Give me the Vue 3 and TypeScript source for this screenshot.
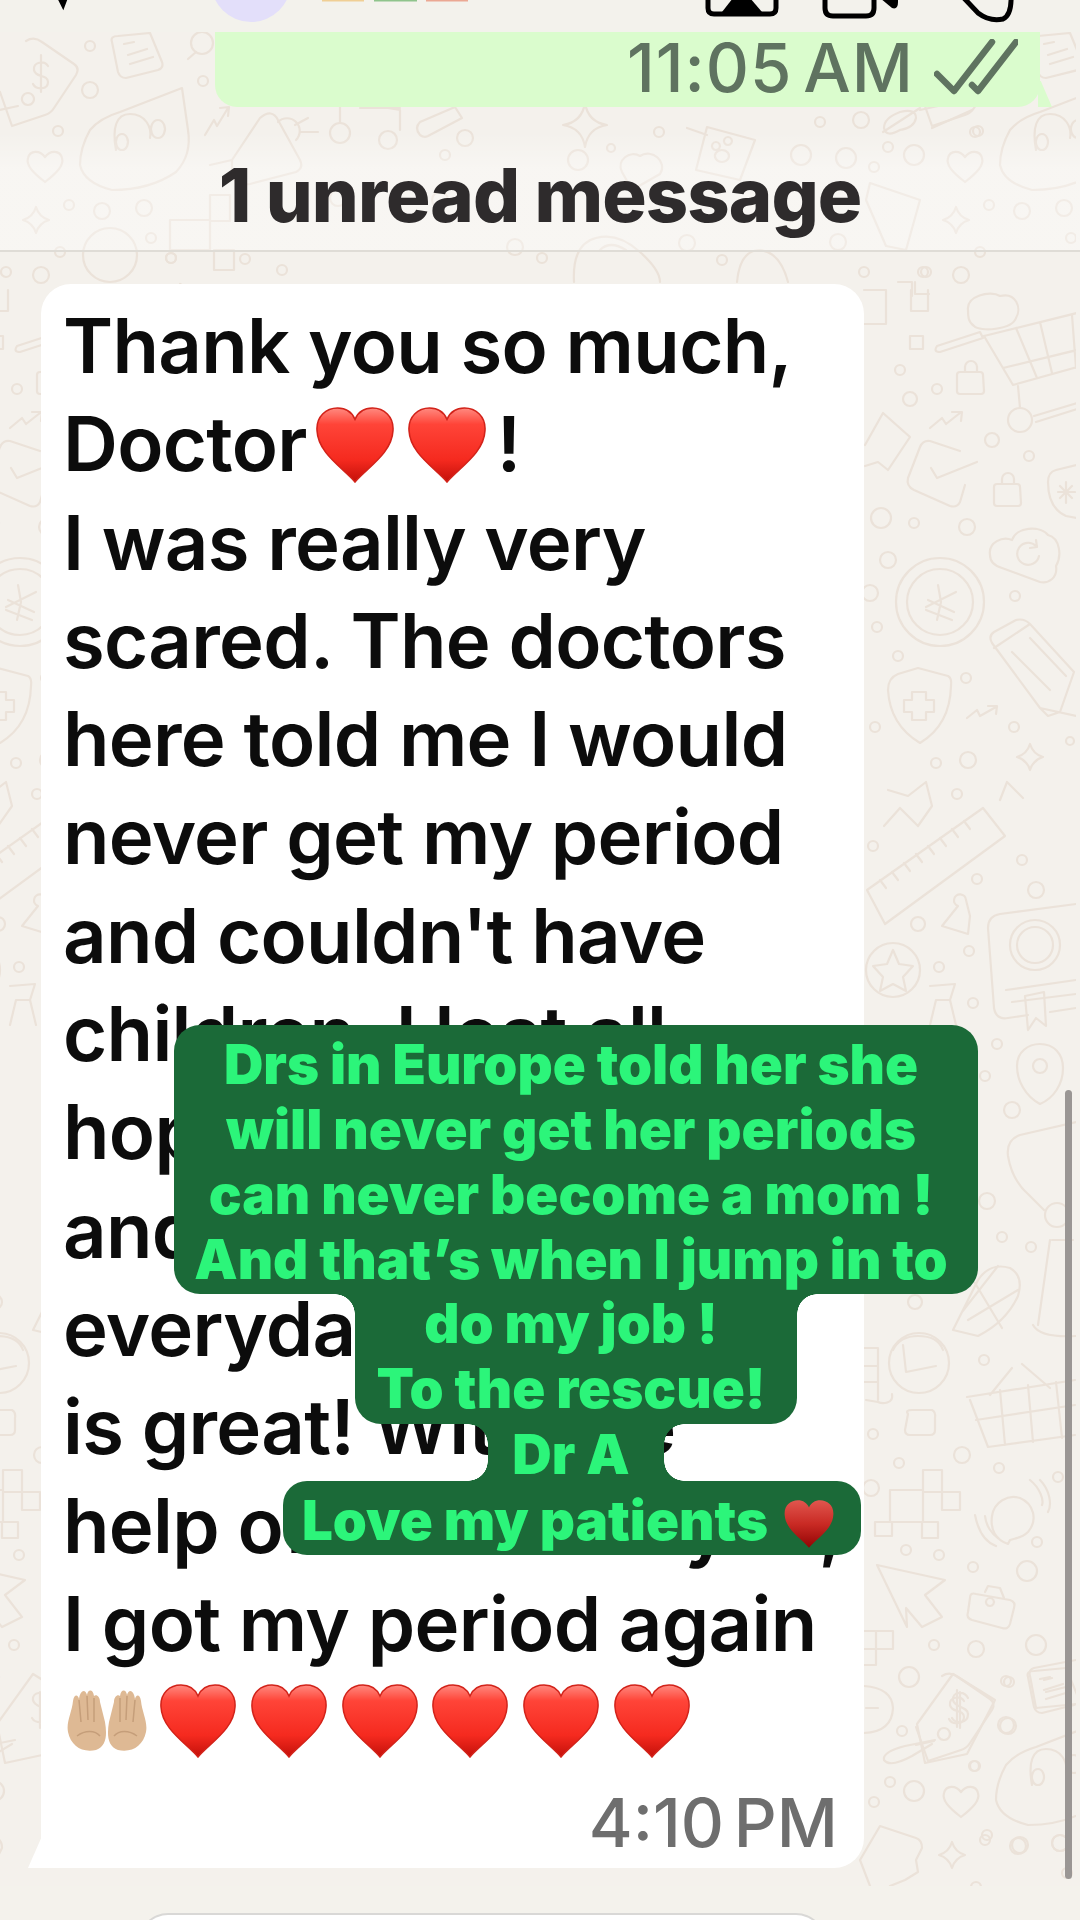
<template>
  <div class="page">
    <svg class="sprites" width="0" height="0" aria-hidden="true">
      <defs>
        <linearGradient id="heart-fill" x1="0" y1="0" x2="0" y2="1">
          <stop offset="0" stop-color="#ff8a80" />
          <stop offset="0.22" stop-color="#ff4438" />
          <stop offset="0.7" stop-color="#f52a1f" />
          <stop offset="1" stop-color="#c4100a" />
        </linearGradient>
        <linearGradient id="heart-dark" x1="0" y1="0" x2="0" y2="1">
          <stop offset="0" stop-color="#e0564e" />
          <stop offset="0.5" stop-color="#c92a24" />
          <stop offset="1" stop-color="#930404" />
        </linearGradient>
        <symbol id="heart" viewBox="0 0 76 76">
          <path :d="heartPath" fill="url(#heart-fill)" stroke="#d2231a" stroke-width="1.5" />
        </symbol>
        <symbol id="heart-small" viewBox="0 0 76 76">
          <path :d="heartPath" fill="url(#heart-dark)" />
        </symbol>
      </defs>
    </svg>

    <svg class="top" width="1080" height="32" viewBox="0 0 1080 32">
      <path d="M58 -6 L63 4 L66 -4" fill="none" stroke="#000" stroke-width="5" stroke-linecap="round" />
      <circle cx="251" cy="-18" r="40" fill="#e3dffa" />
      <rect x="322" y="0" width="42" height="1.5" fill="#f0cf95" />
      <rect x="374" y="0" width="43" height="1.5" fill="#8fc48c" />
      <rect x="426" y="0" width="42" height="1.5" fill="#eba893" />
      <path d="M708 -6 V8 Q708 14 714 14 H770 Q776 14 776 8 V-6" fill="none" stroke="#000" stroke-width="5" />
      <path d="M722 12 L733 -2 H750 L762 12 Z" fill="#000" />
      <path d="M825 -6 V8 Q825 16 833 16 H866 Q874 16 874 8 V-6" fill="none" stroke="#000" stroke-width="5" />
      <path d="M880 -2 L892 8 Q898 10 898 2 V-6 H880 Z" fill="#000" />
      <path d="M962 -4 L978 13 Q990 22 1003 19 Q1012 15 1011 -6" fill="none" stroke="#000" stroke-width="5" stroke-linecap="round" />
    </svg>

    <main class="chat">
      <svg class="doodles" width="1076" height="1854" viewBox="0 32 1076 1854" fill="none">
        <g id="strip">
          <path v-for="(d, i) in stripPaths" :key="i" :d="d" />
          <circle v-for="(c, i) in stripDots" :key="i" :cx="c[0]" :cy="c[1]" :r="c[2]" />
        </g>
        <g id="margin">
          <path v-for="(d, i) in marginPaths" :key="i" :d="d" />
          <circle v-for="(c, i) in marginDots" :key="i" :cx="c[0]" :cy="c[1]" :r="c[2]" />
        </g>
        <use href="#margin" x="-920" />
        <use href="#strip" x="920" />
        <use href="#strip" x="916" y="1635" />
        <path v-for="(d, i) in topPaths" :key="i" :d="d" />
        <circle v-for="(c, i) in topDots" :key="i" :cx="c[0]" :cy="c[1]" :r="c[2]" />
      </svg>

      <div class="sent">
        <span class="sent-time">11:05 AM</span>
        <svg class="ticks" width="84" height="56" viewBox="0 0 84 56" fill="none">
          <path d="M3 35 L20 52 L58 3 M38 46 L44 52 L82 3" stroke="#5f7360" stroke-width="6.5" stroke-linecap="round" stroke-linejoin="round" />
        </svg>
      </div>

      <div class="unread"><span>1 unread message</span></div>

      <section class="received">
        <div class="line">Thank you so much,</div>
        <div class="line">
          Doctor<svg class="heart first"><use href="#heart" /></svg><svg class="heart"><use href="#heart" /></svg><span class="bang">!</span>
        </div>
        <div v-for="l in messageLines" :key="l" class="line">{{ l }}</div>
        <div class="line emojis">
          <svg class="hands" width="84" height="66" viewBox="0 0 84 66">
            <g v-for="t in handTransforms" :key="t" :transform="t">
              <path d="M3 46 C1 36 7 26 8 15 C9 8 13 8 14 13 C15 5 20 2 22 9 C23 3 28 3 29 10 C31 8 35 10 35 16 L40 36 C42 48 42 60 31 64 C17 67 6 60 3 46Z" fill="#deb994" />
              <path d="M14 14 L16 36 M22 10 L23 34 M29 12 L29 36 M12 50 C20 44 30 44 35 50" fill="none" stroke="#c59e7a" stroke-width="1.5" />
            </g>
          </svg>
          <svg v-for="n in 6" :key="n" class="heart row"><use href="#heart" /></svg>
        </div>
        <div class="received-time">4:10 PM</div>

        <div class="caption">
          <div class="cap cap-main">
            <div v-for="l in captionMain" :key="l">{{ l }}</div>
          </div>
          <div class="cap cap-mid">
            <div>do my job !</div>
            <div>To the rescue!</div>
          </div>
          <div class="cap cap-name">Dr A</div>
          <div class="cap cap-love">
            Love my patients<svg class="heart-cap"><use href="#heart-small" /></svg>
          </div>
        </div>
      </section>

      <div class="scrollbar"></div>
    </main>

    <footer class="footer">
      <div class="input"></div>
    </footer>
  </div>
</template>

<script setup lang="ts">
type Dot = [number, number, number];

const heartPath =
  "M38 74 C26 60 2 46 1 24 C0 10 10 2 21 2 C29 2 35 6 38 13 C41 6 47 2 55 2 C66 2 76 10 75 24 C74 46 50 60 38 74Z";

const handTransforms = ["", "matrix(-1 0 0 1 84 0)"];

const messageLines: string[] = [
  "I was really very",
  "scared. The doctors",
  "here told me I would",
  "never get my period",
  "and couldn't have",
  "children. I lost all",
  "hope, but you helped",
  "and I take my pills",
  "everyday. My health",
  "is great! With the",
  "help of Allah and you,",
  "I got my period again",
];

const captionMain: string[] = [
  "Drs in Europe told her she",
  "will never get her periods",
  "can never become a mom !",
  "And that’s when I jump in to",
];

const lock = (x: number, y: number) =>
  `M${x} ${y + 12} h20 q3 0 3 3 l1 16 q0 3 -3 3 h-21 q-3 0 -3 -3 v-16 q0 -3 3 -3z M${x + 5} ${y + 12} v-5 a6 6 0 0 1 12 0 v5`;

const star = (x: number, y: number, r: number) =>
  `M${x} ${y - r} Q${x + 3} ${y - 3} ${x + r} ${y} Q${x + 3} ${y + 3} ${x} ${y + r} Q${x - 3} ${y + 3} ${x - r} ${y} Q${x - 3} ${y - 3} ${x} ${y - r}Z`;

// left end of the wallpaper, it comes back on the right and at the bottom
const stripPaths: string[] = [
  "M26 41 Q34 36 42 42 L74 64 Q80 68 76 75 L54 108 Q51 113 45 115 L12 126 L0 92",
  "M41 55 V92 M48 66 C44 60 33 62 34 70 C35 78 48 74 48 82 C48 90 36 90 33 84",
  "M0 110 L18 106 M28 105 a6 6 0 1 0 -0.1 0",
  "M112 42 Q110 36 118 36 L150 33 L162 62 Q164 68 158 70 L126 78 Q120 78 118 72 Z M124 44 L134 42 M128 55 L147 49 M130 64 L153 57",
  "M196 52 L188 59",
  "M90 130 Q80 148 80 165 Q84 183 112 190 Q150 190 176 172 Q192 155 188 130 L182 88 L120 112 Q100 118 90 130Z",
  "M116 150 C112 128 116 114 130 114 C146 114 152 128 150 138 M122 150 a6 8 0 1 0 -0.1 0 M158 138 a7 9 0 1 0 -0.1 0",
  "M205 135 L214 120 L217 126 L228 108 M220 108 L229 107 L228 116",
  "M45 182 C32 172 26 165 28 158 C30 150 40 150 45 157 C50 150 60 150 62 158 C64 165 58 172 45 182Z",
  star(36, 220, 13),
];
const stripDots: Dot[] = [
  [90, 46, 5], [203, 81, 5], [90, 90, 8], [58, 131, 5], [69, 205, 5],
  [102, 211, 8], [144, 208, 8], [151, 238, 5], [60, 252, 5], [171, 258, 5], [245, 259, 5],
  [202, 43, 11], [41, 275, 8], [6, 272, 5],
];

// wallpaper in the right margin, reused on the left of the bubble
const marginPaths: string[] = [
  "M937 346 L980 332 L983 338 L940 352 Q933 352 937 346Z",
  "M984 336 L1013 385 L1077 367 M984 336 L1077 313 M1003 368 L1077 350 M1016 328 L1037 378 M1040 322 L1052 373 M1072 315 L1076 368",
  "M1018 386 L1020 408 M1034 416 L1077 403 M1036 422 L1077 409",
  "M968 310 C966 296 990 290 1000 296 C1016 292 1022 308 1016 318 C1012 330 980 332 974 326 C968 322 968 316 968 310Z",
  "M910 336h13v13h-13z M911 290v21h17v-21 M864 290 h22 v34 h-22",
  lock(960, 360),
  lock(997, 472),
  "M865 445 L883 413 L910 437 L888 470 L878 462 L865 466",
  "M930 428 L942 418 L946 424 L960 413 M952 412 L962 412 L961 421",
  "M960 451 L930 441 Q923 440 920 447 L908 478 Q906 486 914 490 L950 506 Q957 508 960 502 L965 485 M931 468 L937 478 L977 462",
  "M1077 465 L1056 470 Q1048 472 1048 482 Q1048 508 1066 516 L1077 518 M1058 492 L1075 492 M1066 482 L1066 503 M1060 486 L1072 498 M1072 486 L1060 498",
  "M990 555 C988 542 1003 536 1012 540 C1016 527 1040 525 1048 535 C1060 538 1062 556 1056 566 C1058 578 1048 584 1040 582 L1002 568 C995 566 990 562 990 555Z",
  "M1036 546 A11 11 0 1 0 1039 556 M1036 540 L1037 547 L1030 548",
  "M938 585 L941 602 L937 620 M956 592 L926 607 M928 600 L954 612 M926 610 L952 620",
  "M992 643 Q988 636 994 632 L1016 620 Q1024 618 1030 624 L1074 672 L1060 712 L1048 716 L1040 708 Z M994 648 L1030 624 M1012 652 L1050 690 M1030 638 L1066 676 M1040 708 L1076 716",
  "M888 690 Q888 678 898 674 L918 668 L948 676 Q952 678 951 686 Q950 725 920 743 Q890 725 888 690Z M912 692 h14 v8 h8 v12 h-8 v8 h-14 v-8 h-8 v-12 h8z",
  "M967 718 L977 710 L980 716 L996 707 M988 706 L997 706 L996 714",
  star(1030, 757, 13),
  "M884 826 L900 808 M888 790 L908 796 L926 782 L932 806 L918 826 L900 808",
  "M1000 800 L1007 782 L1023 798",
  "M867 890 L983 808 L1005 836 L885 924 Z M880 880 L886 888 M892 872 L898 880 M904 863 L910 871 M916 854 L922 862 M928 846 L934 854 M940 838 L946 846 M952 829 L958 837 M964 821 L970 829",
  "M893 950 L899 964 L913 966 L903 977 L906 991 L893 984 L880 991 L883 977 L873 966 L887 964 Z",
  "M942 926 L958 906 a6 6 0 1 1 8 -6 L970 916 L968 934 Z",
  "M1076 904 L1000 914 Q988 916 988 928 L994 1008 Q996 1020 1008 1018 L1028 1015 M1050 1012 L1076 1008 M1006 990 L1076 980 M1012 1002 L1076 994",
  "M1025 996 L1044 992 L1046 1026 L1036 1018 L1028 1030 Z",
  "M930 986 L955 984 L950 1000 L956 1025 M936 1000 L930 1025 M936 1000 H950",
  "M1040 1104 C1025 1096 1017 1080 1017 1066 C1017 1052 1028 1044 1040 1044 C1054 1044 1063 1054 1063 1068 C1063 1084 1054 1098 1040 1104Z",
  "M1076 1122 L1020 1135 Q1006 1140 1008 1156 Q1012 1180 1028 1194 L1044 1210",
  "M1052 1240 L1073 1240 M1050 1240 L1038 1325 M1033 1325 Q1040 1338 1076 1336",
  "M953 1330 L978 1280 Q990 1262 1010 1268 Q1024 1276 1018 1296 Q1006 1322 978 1336 Z M975 1283 L1002 1328 M998 1266 L962 1312 M1018 1290 L968 1320",
  "M893 1350 Q900 1336 918 1336 Q938 1336 943 1350",
  "M892 1394 C894 1404 882 1404 878 1402 L866 1400 M864 1348 H878 V1400 M864 1366 H878 M864 1382 H878",
  "M903 1345 L906 1372 L936 1366",
  "M967 1397 L1075 1380 M970 1400 L988 1447 L1075 1435 M976 1420 L1075 1405 M1000 1390 L1005 1445 M1028 1385 L1033 1442 M1056 1382 L1062 1438 M990 1395 L1012 1368 M1022 1364 L1050 1388",
  "M908 1414 Q905 1410 912 1410 H932 Q936 1412 935 1418 V1430 Q935 1435 930 1435 H910 Q905 1435 905 1430 Z",
  "M923 1470 h19 v22 h-19z M890 1490 h33 v32 h-33z M942 1492 h18 v18 h-18z M922 1522 h16 v16 h-16z M875 1522 h17 v14 h-17z M923 1492 v30",
  "M1008 1544 C996 1540 990 1530 992 1516 C994 1502 1008 1494 1020 1498 C1034 1504 1038 1520 1028 1532 C1022 1538 1016 1538 1010 1540 Z",
  "M1040 1480 C1050 1490 1052 1505 1048 1512 M1030 1480 C1040 1488 1044 1500 1042 1505 M975 1515 C978 1530 985 1542 996 1546 M985 1516 C986 1526 992 1534 998 1538",
  "M877 1565 L945 1580 L925 1595 L942 1617 L922 1627 L906 1608 L907 1627 Z",
  "M970 1598 Q970 1592 976 1594 L1010 1600 Q1016 1602 1014 1608 L1010 1624 Q1008 1630 1002 1628 L972 1620 Q966 1618 968 1612 Z M985 1592 L988 1586 L1000 1588 L1004 1598 M990 1606 a4 4 0 1 0 -0.1 0",
  "M1076 1660 L1034 1668 Q1028 1670 1030 1676 L1036 1708 L1076 1704 M1044 1680 L1052 1678 M1046 1692 L1070 1686",
  "M864 1631 h12 v18 h-12 M876 1631 h17 v18 h-17z M864 1649 h12 v16 h-12",
  "M864 1686 Q892 1688 893 1708 Q892 1732 864 1733 M866 1708 H878",
  "M953 1674 L995 1700 L967 1754 L925 1763 L917 1724 Z M960 1692 V1728 M968 1698 C964 1690 952 1692 953 1700 C954 1708 968 1706 968 1714 C968 1724 955 1724 952 1718",
  "M935 1740 L905 1746 Q882 1752 884 1760 Q890 1768 912 1756 L932 1744",
  "M870 1886 L860 1860 L880 1826 L916 1838 Q922 1840 922 1848 L916 1860 L918 1872 L905 1880 L890 1886",
];
const marginDots: Dot[] = [
  [1020, 420, 12], [900, 370, 5], [937, 389, 5], [910, 399, 7], [992, 440, 7], [1029, 456, 5],
  [881, 518, 10], [914, 523, 5], [967, 527, 8], [888, 560, 8], [1015, 596, 5], [870, 593, 8],
  [940, 602, 44], [940, 602, 33], [877, 627, 5], [898, 656, 5], [966, 678, 5], [1014, 727, 5],
  [875, 727, 5], [936, 763, 5], [968, 760, 8], [957, 794, 5], [1070, 741, 4], [873, 846, 5],
  [893, 970, 27], [918, 924, 7], [977, 879, 5], [969, 951, 5], [939, 967, 5], [973, 1003, 5],
  [1022, 860, 5], [1036, 890, 8], [997, 1044, 5], [1012, 1110, 8], [985, 1076, 5], [1002, 1237, 5],
  [1031, 1247, 5], [915, 1302, 7], [987, 1201, 8], [1035, 945, 25], [1035, 945, 18], [1040, 1066, 7],
  [1057, 1215, 12], [919, 1363, 30], [873, 1434, 5], [899, 1463, 5], [962, 1455, 8], [984, 1360, 5],
  [999, 1468, 5], [1058, 1477, 5], [906, 1550, 5], [939, 1555, 5], [973, 1567, 5], [1037, 1542, 5],
  [1027, 1571, 10], [871, 1488, 8], [934, 1645, 5], [976, 1649, 8], [1036, 1645, 10], [909, 1677, 10],
  [1009, 1682, 5], [1008, 1726, 8], [902, 1731, 5], [975, 1766, 5], [890, 1782, 5], [914, 1791, 10],
  [874, 1802, 5], [987, 1835, 5], [1020, 1845, 8], [1060, 1843, 8],
];

// middle of the strip above the white bubble
const topPaths: string[] = [
  "M232 160 L260 118 Q272 108 278 120 L300 160 Q304 168 296 172 L250 184 Q236 186 232 176 Z M232 160 L210 165",
  "M278 122 A12 12 0 1 1 296 140 M295 125 L308 118 M300 132 L318 132",
  "M340 105 V122 M388 108 L400 110 V130 M360 108 H400",
  "M420 135 Q414 128 420 122 L455 107 L462 118 L428 136 Q424 138 420 135Z",
  "M574 282 Q572 244 596 238 Q618 232 640 252 Q660 270 660 282 M600 250 Q610 240 626 250",
  star(585, 125, 22),
  "M687 128 L707 135 M707 127 L755 140 L740 180 L696 170 Z M716 150 a4 4 0 1 0 -0.1 0 M728 145 a4 4 0 1 0 -0.1 0 M722 162 a7 6 0 1 0 -0.1 0",
  "M622 172 C616 160 630 150 640 156 C652 148 668 162 660 174 L632 190 Z",
  "M883 132 L920 108 M900 130 Q886 138 884 128 Q884 118 900 112 Q916 108 916 118 Q914 128 900 130 M932 128 L972 110",
  "M870 183 L920 200 L906 250 L886 246 L866 200 Z",
  "M737 282 Q740 250 760 250 Q780 252 788 282",
  "M898 282 h14 v14 M915 282 v12 h14",
  "M170 220 h40 v30 h-40z M210 195 h20 v26 h-20z M214 250 h20 v20 h-20z",
  "M196 294 L180 284",
];
const topDots: Dot[] = [
  [340, 133, 10], [388, 140, 9], [465, 138, 8], [659, 132, 5], [611, 148, 4], [861, 120, 8], [820, 122, 5],
  [975, 132, 5], [801, 155, 10], [846, 158, 10], [914, 155, 10], [888, 147, 5], [874, 167, 5], [578, 160, 10],
  [838, 242, 8], [722, 260, 5], [687, 243, 8], [542, 258, 5], [515, 247, 8], [864, 272, 5], [923, 272, 5],
  [338, 198, 8], [440, 200, 8], [445, 155, 5], [171, 258, 5], [282, 270, 5], [110, 255, 27],
];
</script>

<style>
html,
body {
  margin: 0;
  background: #f4f2ec;
}
</style>

<style scoped>
.page {
  width: 1080px;
  height: 1920px;
  display: flex;
  flex-direction: column;
  overflow: hidden;
  background: #f4f2ec;
  font-family: Inter, "Liberation Sans", sans-serif;
}

.sprites {
  position: absolute;
}

.top {
  display: block;
  flex: none;
  background: #f3f2ec;
}

.chat {
  position: relative;
  isolation: isolate;
  height: 1854px;
  flex: none;
  display: flex;
  flex-direction: column;
  background: #f4f1ec;
}

.doodles {
  position: absolute;
  left: 0;
  top: 0;
  z-index: -1;
  stroke: #ebe2d9;
  stroke-width: 2.2;
  stroke-linecap: round;
  stroke-linejoin: round;
}

.sent {
  position: relative;
  margin-left: 215px;
  width: 825px;
  height: 75px;
  box-sizing: border-box;
  padding-right: 22px;
  display: flex;
  justify-content: flex-end;
  align-items: center;
  gap: 20px;
  background: #dafccd;
  border-radius: 0 0 22px 22px;
}

.sent::after {
  content: "";
  position: absolute;
  right: -12px;
  bottom: 0;
  width: 14px;
  height: 26px;
  background: #dafccd;
  clip-path: polygon(0 0, 20% 0, 100% 100%, 0 100%);
}

.sent-time {
  margin-top: -4px;
  font-size: 67px;
  line-height: 75px;
  font-weight: 500;
  color: #5f7360;
  letter-spacing: 1px;
  word-spacing: -8px;
}

.ticks {
  margin-top: -6px;
}

.unread {
  margin-top: 25px;
  height: 120px;
  padding-top: 8px;
  box-sizing: border-box;
  display: flex;
  align-items: center;
  justify-content: center;
  background: linear-gradient(to bottom, rgba(255, 255, 255, 0), rgba(255, 255, 255, 0.35) 30%);
  border-bottom: 2px solid #dfdcd6;
  font-size: 74px;
  font-weight: 800;
  color: #2e2b2c;
  letter-spacing: -0.9px;
}

.received {
  position: relative;
  margin-top: 32px;
  margin-left: 41px;
  width: 823px;
  height: 1584px;
  box-sizing: border-box;
  padding: 12px 24px 0 22px;
  background: #fff;
  border-radius: 30px 30px 30px 12px;
  color: #0c0c0c;
}

.received::before {
  content: "";
  position: absolute;
  left: -13px;
  bottom: 0;
  width: 24px;
  height: 30px;
  background: #fff;
  clip-path: polygon(55% 0, 100% 0, 100% 100%, 0 100%);
}

.line {
  height: 98.3px;
  font-size: 76px;
  line-height: 98.3px;
  font-weight: 600;
  letter-spacing: -0.7px;
  white-space: nowrap;
}

.heart {
  width: 78px;
  height: 78px;
  vertical-align: -13px;
  margin-left: 14px;
}

.heart.first {
  margin-left: 9px;
}

.bang {
  margin-left: 11px;
}

.emojis {
  display: flex;
  align-items: flex-start;
}

.hands {
  margin-top: 14px;
  margin-left: 2px;
}

.heart.row {
  width: 76px;
  height: 76px;
  margin: 11px 14.8px 0 0;
}

.hands + .heart.row {
  margin-left: 11px;
}

.received-time {
  margin-top: 15px;
  padding-right: 2px;
  text-align: right;
  font-size: 67px;
  line-height: 76px;
  font-weight: 500;
  color: #6e6e6e;
  letter-spacing: 0;
  word-spacing: -8px;
}

.caption {
  position: absolute;
  left: 133px;
  top: 741px;
  width: 804px;
  display: flex;
  flex-direction: column;
  align-items: center;
  font-size: 54.6px;
  line-height: 65px;
  font-weight: 900;
  letter-spacing: 0;
  color: #2cf57a;
  text-align: center;
}

.cap {
  position: relative;
  box-sizing: border-box;
  background: #1b6a38;
  white-space: nowrap;
}

.cap-main {
  width: 804px;
  padding: 7px 10px 2px 0;
  border-radius: 26px;
}

.cap-mid {
  width: 442px;
  height: 130px;
  padding-right: 10px;
  border-radius: 0 0 26px 26px;
}

.cap-mid > div:first-child {
  margin-top: -3px;
}

.cap-mid::before,
.cap-mid::after {
  content: "";
  position: absolute;
  top: 0;
  width: 20px;
  height: 20px;
}

.cap-mid::before {
  left: -20px;
  background: radial-gradient(circle at 0 100%, transparent 19.5px, #1b6a38 20px);
}

.cap-mid::after {
  right: -20px;
  background: radial-gradient(circle at 100% 100%, transparent 19.5px, #1b6a38 20px);
}

.cap-name {
  width: 176px;
  height: 57px;
  padding-right: 10px;
  line-height: 60px;
}

.cap-name::before,
.cap-name::after {
  content: "";
  position: absolute;
  top: 0;
  bottom: 0;
  width: 20px;
}

.cap-name::before {
  left: -20px;
  background:
    radial-gradient(circle at 0 100%, transparent 19.5px, #1b6a38 20px) top / 20px 20px no-repeat,
    radial-gradient(circle at 0 0, transparent 19.5px, #1b6a38 20px) bottom / 20px 20px no-repeat;
}

.cap-name::after {
  right: -20px;
  background:
    radial-gradient(circle at 100% 100%, transparent 19.5px, #1b6a38 20px) top / 20px 20px no-repeat,
    radial-gradient(circle at 100% 0, transparent 19.5px, #1b6a38 20px) bottom / 20px 20px no-repeat;
}

.cap-love {
  width: 578px;
  height: 74px;
  line-height: 78px;
  margin-right: 8px;
  padding-left: 19px;
  text-align: left;
  border-radius: 24px;
}

.heart-cap {
  width: 54px;
  height: 50px;
  margin-left: 14px;
  vertical-align: -9px;
}

.scrollbar {
  position: absolute;
  left: 1065px;
  top: 1058px;
  width: 7px;
  height: 789px;
  border-radius: 4px;
  background: #9a9694;
}

.footer {
  flex: 1;
  padding: 27px 0 0 138px;
  background: #f4f2ec;
}

.input {
  width: 688px;
  height: 40px;
  box-sizing: border-box;
  background: #fff;
  border: 2px solid #d9d8d6;
  border-bottom: none;
  border-radius: 30px 30px 0 0;
}
</style>
